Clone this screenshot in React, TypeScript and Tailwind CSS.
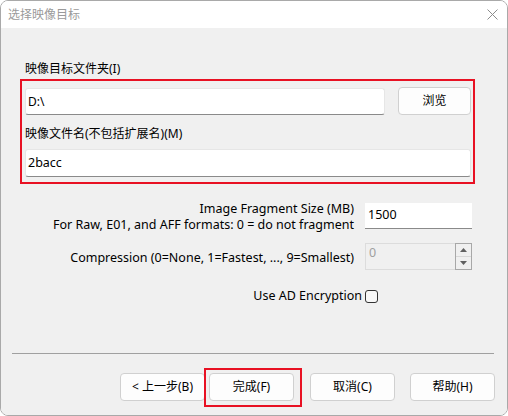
import React from "react";

const font = "font-['Noto_Sans','Noto_Sans_CJK_SC',sans-serif]";

function Button({ label, w = "w-[85px]" }: { label: string; w?: string }) {
  return (
    <div
      className={`${w} h-[28px] flex items-center justify-center rounded-[4px] border border-[#d0d0d0] bg-[#fdfdfd] text-[12px] text-black`}
    >
      {label}
    </div>
  );
}

export default function App() {
  return (
    <div className={`relative w-[508px] h-[416px] bg-white ${font} text-[12px] leading-[16px] text-black`}>
      {/* window */}
      <div className="w-full h-full flex flex-col rounded-[8px] border border-[#a9a9a9] overflow-hidden">
        {/* title bar */}
        <div className="h-[27px] shrink-0 bg-white flex items-center justify-between pl-[7px] pr-[9px]">
          <span className="text-[12px] text-[#9a9a9a]">选择映像目标</span>
          <svg width="11" height="11" viewBox="0 0 11 11" className="mb-[1px]">
            <path d="M0.5 0.5 L10.5 10.5 M10.5 0.5 L0.5 10.5" stroke="#8c8c8c" strokeWidth="1" />
          </svg>
        </div>

        {/* body */}
        <div className="flex-1 flex flex-col bg-[#f0f0f0]">
          <div className="pl-[24px] pt-[33px] flex flex-col">
            <div>映像目标文件夹(I)</div>
            <div className="mt-[10px] flex items-start">
              <div className="mt-[1px] w-[360px] h-[27px] flex items-center pl-[2px] bg-white border border-[#e6e6e6] border-b-[#8a8a8a] rounded-[3px]">
                D:\
              </div>
              <div className="ml-[13px]">
                <Button label="浏览" w="w-[73px]" />
              </div>
            </div>
            <div className="mt-[11px]">映像文件名(不包括扩展名)(M)</div>
            <div className="mt-[7px] w-[446px] h-[28px] flex items-center pl-[2px] bg-white border border-[#e6e6e6] border-b-[#8a8a8a] rounded-[3px] text-[12.5px]">
              2bacc
            </div>

            {/* options */}
            <div className="w-[447px] mt-[24px] flex flex-col text-[12.5px]">
              <div className="flex items-start gap-[11px]">
                <div className="flex-1 text-right">
                  <div>Image Fragment Size (MB)</div>
                  <div>For Raw, E01, and AFF formats: 0 = do not fragment</div>
                </div>
                <div className="mt-[2px] w-[107px] h-[26px] pl-[3px] pt-[4px] bg-white border-b border-[#8a8a8a]">
                  1500
                </div>
              </div>

              <div className="mt-[10px] flex items-center gap-[11px]">
                <div className="flex-1 text-right pt-[2px]">
                  Compression (0=None, 1=Fastest, ..., 9=Smallest)
                </div>
                <div className="w-[107px] h-[27px] flex border border-[#dcdcdc] bg-[#f0f0f0]">
                  <div className="flex-1 pl-[3px] pt-[1px] text-[#a0a0a0]">0</div>
                  <div className="w-[17px] h-[27px] -mt-[1px] -mr-[1px] flex flex-col border border-[#a8a8a8] bg-[#f0f0f0]">
                    <div className="flex-1 flex items-center justify-center border-b border-[#d8d8d8]">
                      <svg width="7" height="4" viewBox="0 0 7 4">
                        <path d="M0 4 L3.5 0 L7 4 Z" fill="#606060" />
                      </svg>
                    </div>
                    <div className="flex-1 flex items-center justify-center">
                      <svg width="7" height="4" viewBox="0 0 7 4">
                        <path d="M0 0 L3.5 4 L7 0 Z" fill="#606060" />
                      </svg>
                    </div>
                  </div>
                </div>
              </div>

              <div className="mt-[18px] flex items-center justify-end pr-[94px]">
                <span>Use AD Encryption</span>
                <div className="ml-[3px] w-[13px] h-[13px] rounded-[3px] border border-[#333333] bg-[#f7f7f7]" />
              </div>
            </div>
          </div>

          {/* separator */}
          <div className="mt-[49px] ml-[11px] w-[482px] h-px bg-[#a0a0a0]" />

          {/* buttons */}
          <div className="mt-[19px] flex items-center justify-end pr-[12px]">
            <Button label="<  上一步(B)" />
            <div className="ml-[4px]">
              <Button label="完成(F)" />
            </div>
            <div className="ml-[16px]">
              <Button label="取消(C)" />
            </div>
            <div className="ml-[15px]">
              <Button label="帮助(H)" />
            </div>
          </div>
        </div>
      </div>

      {/* red annotation boxes */}
      <div className="absolute left-[20px] top-[79px] w-[455px] h-[105px] border-2 border-[#e81123] pointer-events-none" />
      <div className="absolute left-[204px] top-[368px] w-[98px] h-[39px] border-2 border-[#e81123] pointer-events-none" />
    </div>
  );
}
